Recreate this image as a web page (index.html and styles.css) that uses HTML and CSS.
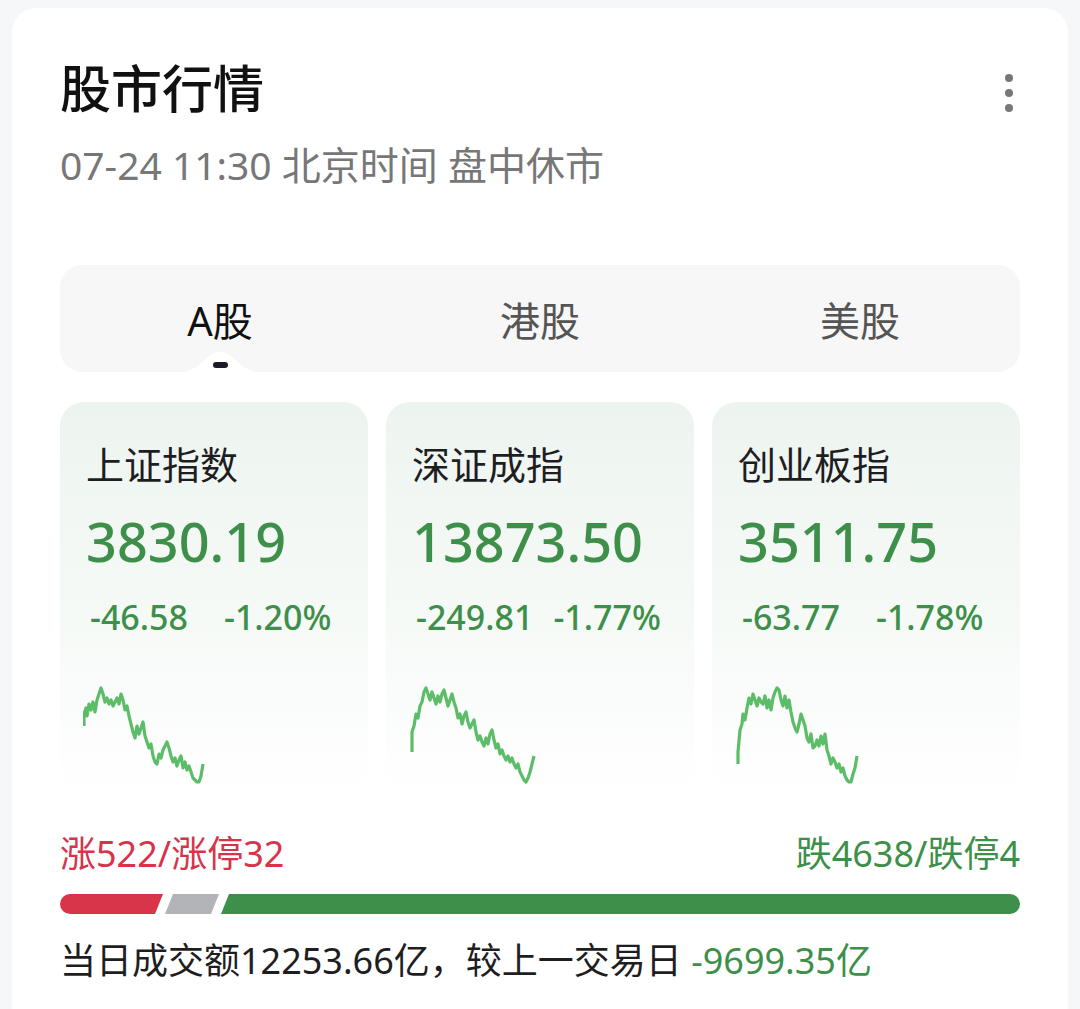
FILE: index.html
```html
<!DOCTYPE html>
<html lang="zh-CN">
<head>
  <meta charset="UTF-8">
  <meta name="viewport" content="width=device-width, initial-scale=1.0">
  <title>股市行情</title>
  <link rel="stylesheet" href="styles.css">
</head>
<body>
  <div class="panel">
    <div class="header">
      <div>
        <h1 class="title">股市行情</h1>
        <div class="subtitle">07-24 11:30 北京时间 盘中休市</div>
      </div>
      <div class="more">
        <span></span><span></span><span></span>
      </div>
    </div>

    <div class="tabs">
      <div class="tab active">
        A股
        <svg class="bump" viewBox="0 0 80 22" width="80" height="22">
          <path d="M0 22 C22 22 24 2 40 2 C56 2 58 22 80 22 Z" fill="#fff"/>
        </svg>
        <i class="dot"></i>
      </div>
      <div class="tab">港股</div>
      <div class="tab">美股</div>
    </div>

    <div class="indexes">
      <div class="index">
        <div class="name">上证指数</div>
        <div class="value">3830.19</div>
        <div class="change"><span>-46.58</span><span>-1.20%</span></div>
        <svg class="spark" viewBox="0 0 130 100" width="130" height="100">
          <polyline points="1,42 1,30 3,24 4,32 6,20 8,26 10,18 12,28 14,16 16,10 18,4 20,10 22,18 24,14 26,20 28,16 30,22 32,18 34,14 36,20 38,10 40,16 42,26 44,22 46,32 48,40 50,48 52,54 54,42 56,50 58,44 60,38 62,52 64,58 66,64 68,60 70,72 72,78 74,80 76,70 78,74 80,66 82,62 84,58 86,64 88,72 90,78 92,74 94,82 96,76 98,72 100,84 102,78 104,86 106,82 108,88 110,94 112,96 114,98 116,98 118,92 120,80"/>
        </svg>
      </div>
      <div class="index">
        <div class="name">深证成指</div>
        <div class="value">13873.50</div>
        <div class="change"><span>-249.81</span><span>-1.77%</span></div>
        <svg class="spark" viewBox="0 0 130 100" width="130" height="100">
          <polyline points="3,68 3,48 5,42 7,30 9,34 11,22 13,18 15,8 17,4 19,10 21,16 23,8 25,14 27,20 29,12 31,18 33,10 35,6 37,14 39,22 41,16 43,10 45,18 47,24 49,34 51,30 53,40 55,32 57,28 59,38 61,44 63,40 65,36 67,48 69,56 71,52 73,58 75,62 77,54 79,60 81,50 83,46 85,56 87,64 89,60 91,70 93,66 95,72 97,76 99,72 101,78 103,74 105,80 107,84 109,80 111,88 113,92 115,96 117,98 119,94 121,88 123,80 125,72"/>
        </svg>
      </div>
      <div class="index">
        <div class="name">创业板指</div>
        <div class="value">3511.75</div>
        <div class="change"><span>-63.77</span><span>-1.78%</span></div>
        <svg class="spark" viewBox="0 0 130 100" width="130" height="100">
          <polyline points="3,80 3,68 5,46 7,40 8,30 10,36 12,24 14,14 16,20 18,10 20,16 22,22 24,14 26,18 28,20 30,12 32,24 34,16 36,26 38,14 40,8 42,4 44,6 46,16 48,22 50,12 52,24 54,16 56,28 58,38 60,44 62,48 64,40 66,30 68,36 70,42 72,54 74,58 76,50 78,64 80,62 82,56 84,62 86,52 88,60 90,50 92,66 94,72 96,80 98,74 100,78 102,84 104,80 106,88 108,84 110,92 112,96 114,98 116,98 118,90 120,84 122,72"/>
        </svg>
      </div>
    </div>

    <div class="breadth">
      <span class="up">涨522/涨停32</span>
      <span class="down">跌4638/跌停4</span>
    </div>
    <div class="bar">
      <div class="seg seg-up" style="width: 103px"></div>
      <div class="seg seg-flat" style="width: 54px"></div>
      <div class="seg seg-down"></div>
    </div>

    <div class="turnover">当日成交额12253.66亿，较上一交易日 <span class="down">-9699.35亿</span></div>
  </div>
</body>
</html>
```

FILE: styles.css
```css
* {
  margin: 0;
  padding: 0;
  box-sizing: border-box;
}
body {
  background-color: #f6f7f9;
  font-family: 'Noto Sans', 'Noto Sans CJK SC', sans-serif;
  color: #1c1c1e;
}
.panel {
  margin: 8px 12px 0;
  padding: 50px 48px 60px;
  background: #fff;
  border-radius: 24px;
  min-height: 1040px;
}
.header {
  display: flex;
  justify-content: space-between;
  align-items: flex-start;
}
.title {
  font-size: 51px;
  line-height: 60px;
  font-weight: 500;
  color: #111;
}
.subtitle {
  margin-top: 24px;
  font-size: 39px;
  line-height: 46px;
  color: #777;
}
.more {
  display: flex;
  flex-direction: column;
  gap: 7px;
  margin-top: 16px;
  margin-right: 7px;
}
.more span {
  width: 8px;
  height: 8px;
  border-radius: 50%;
  background: #777;
}
.tabs {
  display: grid;
  grid-template-columns: repeat(3, 1fr);
  margin-top: 77px;
  height: 107px;
  background: #f7f7f7;
  border-radius: 22px;
}
.tab {
  position: relative;
  display: flex;
  align-items: center;
  justify-content: center;
  font-size: 40px;
  color: #555;
}
.tab.active {
  color: #111;
}
.bump {
  position: absolute;
  left: 50%;
  bottom: 0;
  transform: translateX(-50%);
}
.dot {
  position: absolute;
  left: 50%;
  bottom: 4px;
  width: 15px;
  height: 6px;
  margin-left: -7px;
  border-radius: 3px;
  background: #1b1b2b;
}
.indexes {
  display: grid;
  grid-template-columns: repeat(3, 1fr);
  gap: 18px;
  margin-top: 30px;
}
.index {
  height: 398px;
  padding: 39px 0 0 26px;
  border-radius: 24px;
  background: linear-gradient(180deg, #edf4f0 0%, #f6faf7 55%, #ffffff 100%);
}
.name {
  font-size: 38px;
  line-height: 46px;
  color: #1e1e22;
}
.value {
  margin-top: 22px;
  font-size: 54px;
  line-height: 64px;
  font-weight: 500;
  color: #3d8f4a;
}
.change {
  display: flex;
  gap: 20px;
  margin-top: 24px;
  padding-left: 4px;
  font-size: 34px;
  line-height: 40px;
  font-weight: 500;
  color: #3d8f4a;
}
.change span:first-child {
  min-width: 114px;
}
.spark {
  display: block;
  margin: 47px 0 0 -3px;
}
.spark polyline {
  fill: none;
  stroke: #5bbd68;
  stroke-width: 3.2;
  stroke-linejoin: round;
}
.breadth {
  display: flex;
  justify-content: space-between;
  margin-top: 33px;
  font-size: 36px;
  line-height: 42px;
}
.up {
  color: #d8334a;
}
.down {
  color: #3d8f4a;
}
.bar {
  display: flex;
  gap: 2px;
  margin-top: 19px;
  height: 20px;
}
.seg {
  height: 100%;
}
.seg-up {
  background: #d9354a;
  border-radius: 10px 0 0 10px;
  clip-path: polygon(0 0, 100% 0, calc(100% - 8px) 100%, 0 100%);
}
.seg-flat {
  background: #b3b4b7;
  clip-path: polygon(8px 0, 100% 0, calc(100% - 8px) 100%, 0 100%);
}
.seg-down {
  flex: 1;
  background: #3d8f4a;
  border-radius: 0 10px 10px 0;
  clip-path: polygon(8px 0, 100% 0, 100% 100%, 0 100%);
}
.turnover {
  margin-top: 26px;
  font-size: 36px;
  line-height: 42px;
  color: #1e1e22;
}
```
